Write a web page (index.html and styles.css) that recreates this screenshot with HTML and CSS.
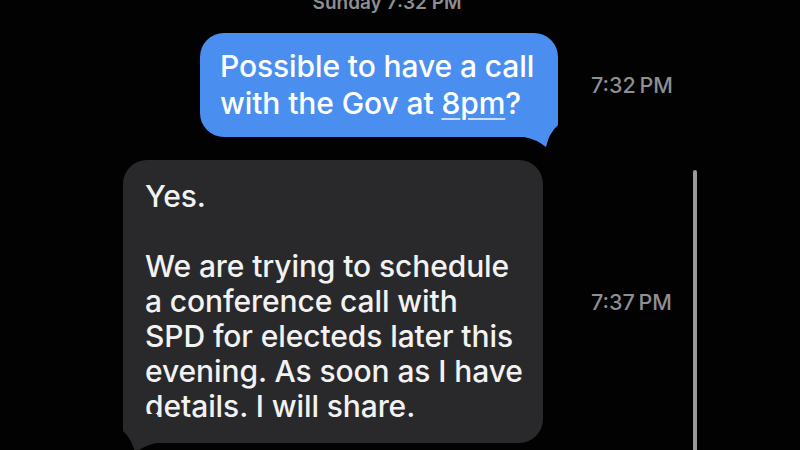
FILE: index.html
```html
<!DOCTYPE html>
<html>
<head>
<meta charset="utf-8">
<link rel="stylesheet" href="styles.css">
</head>
<body>
<div class="screen">
  <div class="header">Sunday 7:32 PM</div>
  <div class="thread">
    <div class="row sent">
      <div class="msgcol">
        <div class="bubble">
          Possible to have a call with the Gov at <span class="link">8</span><span class="link">pm</span>?
          <svg class="tail" width="34" height="40" viewBox="0 0 34 40"><path d="M0,0 L34,0 L34,17 Q25,25 22,39 Q12,31 0,29 Z"/></svg>
        </div>
      </div>
      <div class="time">7:32 PM</div>
    </div>
    <div class="row received">
      <div class="msgcol">
        <div class="bubble">
          <p>Yes.</p>
          <p class="para">We are trying to schedule a conference call with SPD for electeds later this evening. As soon as I have details. I will share.</p>
          <svg class="tail" width="34" height="40" viewBox="0 0 34 40"><path d="M34,0 L0,0 L0,17 Q9,25 12,39 Q22,31 34,29 Z"/></svg>
        </div>
      </div>
      <div class="time">7:37 PM</div>
    </div>
  </div>
  <div class="scrollbar"></div>
</div>
</body>
</html>
```
FILE: styles.css
```css
html, body {
  margin: 0;
  padding: 0;
  background: #000;
}
body {
  font-family: Inter, "Liberation Sans", sans-serif;
  -webkit-font-smoothing: antialiased;
}
.screen {
  position: relative;
  width: 800px;
  height: 450px;
  overflow: hidden;
  background: #020202;
}
.header {
  margin-top: -9px;
  height: 24px;
  line-height: 24px;
  font-size: 19px;
  font-weight: 600;
  color: #8e8e93;
  text-align: center;
  padding-right: 26px;
  margin-bottom: 18px;
}
.thread {
  display: flex;
  flex-direction: column;
  gap: 23px;
  padding-left: 123px;
}
.row {
  display: flex;
  align-items: center;
  gap: 33px;
}
.msgcol {
  width: 435px;
  display: flex;
}
.sent .msgcol {
  justify-content: flex-end;
}
.bubble {
  position: relative;
  box-sizing: border-box;
  border-radius: 24px;
  font-size: 30px;
  font-weight: 500;
  letter-spacing: -0.1px;
}
.sent .bubble {
  width: 358px;
  background: #4a8ff0;
  color: #fff;
  padding: 15px 20px 15px 20px;
  line-height: 37px;
}
.received .bubble {
  width: 420px;
  background: #29292b;
  color: #f2f2f2;
  padding: 19px 20px 19px 22px;
  line-height: 35px;
}
.bubble p {
  margin: 0;
}
.bubble .para {
  margin-top: 35px;
}
.link {
  text-decoration: underline;
  text-decoration-thickness: 1.5px;
  text-underline-offset: 4px;
  text-decoration-color: rgba(255, 255, 255, 0.7);
}
.tail {
  position: absolute;
  bottom: -11px;
  display: block;
}
.sent .tail {
  right: 0;
  fill: #4a8ff0;
}
.received .tail {
  left: 0;
  fill: #29292b;
}
.time {
  font-size: 21.5px;
  font-weight: 500;
  color: #8e8e93;
  white-space: nowrap;
  word-spacing: -2px;
}
.scrollbar {
  position: absolute;
  left: 693px;
  top: 170px;
  width: 4px;
  height: 300px;
  border-radius: 2px;
  background: #9a9a9a;
}
```
